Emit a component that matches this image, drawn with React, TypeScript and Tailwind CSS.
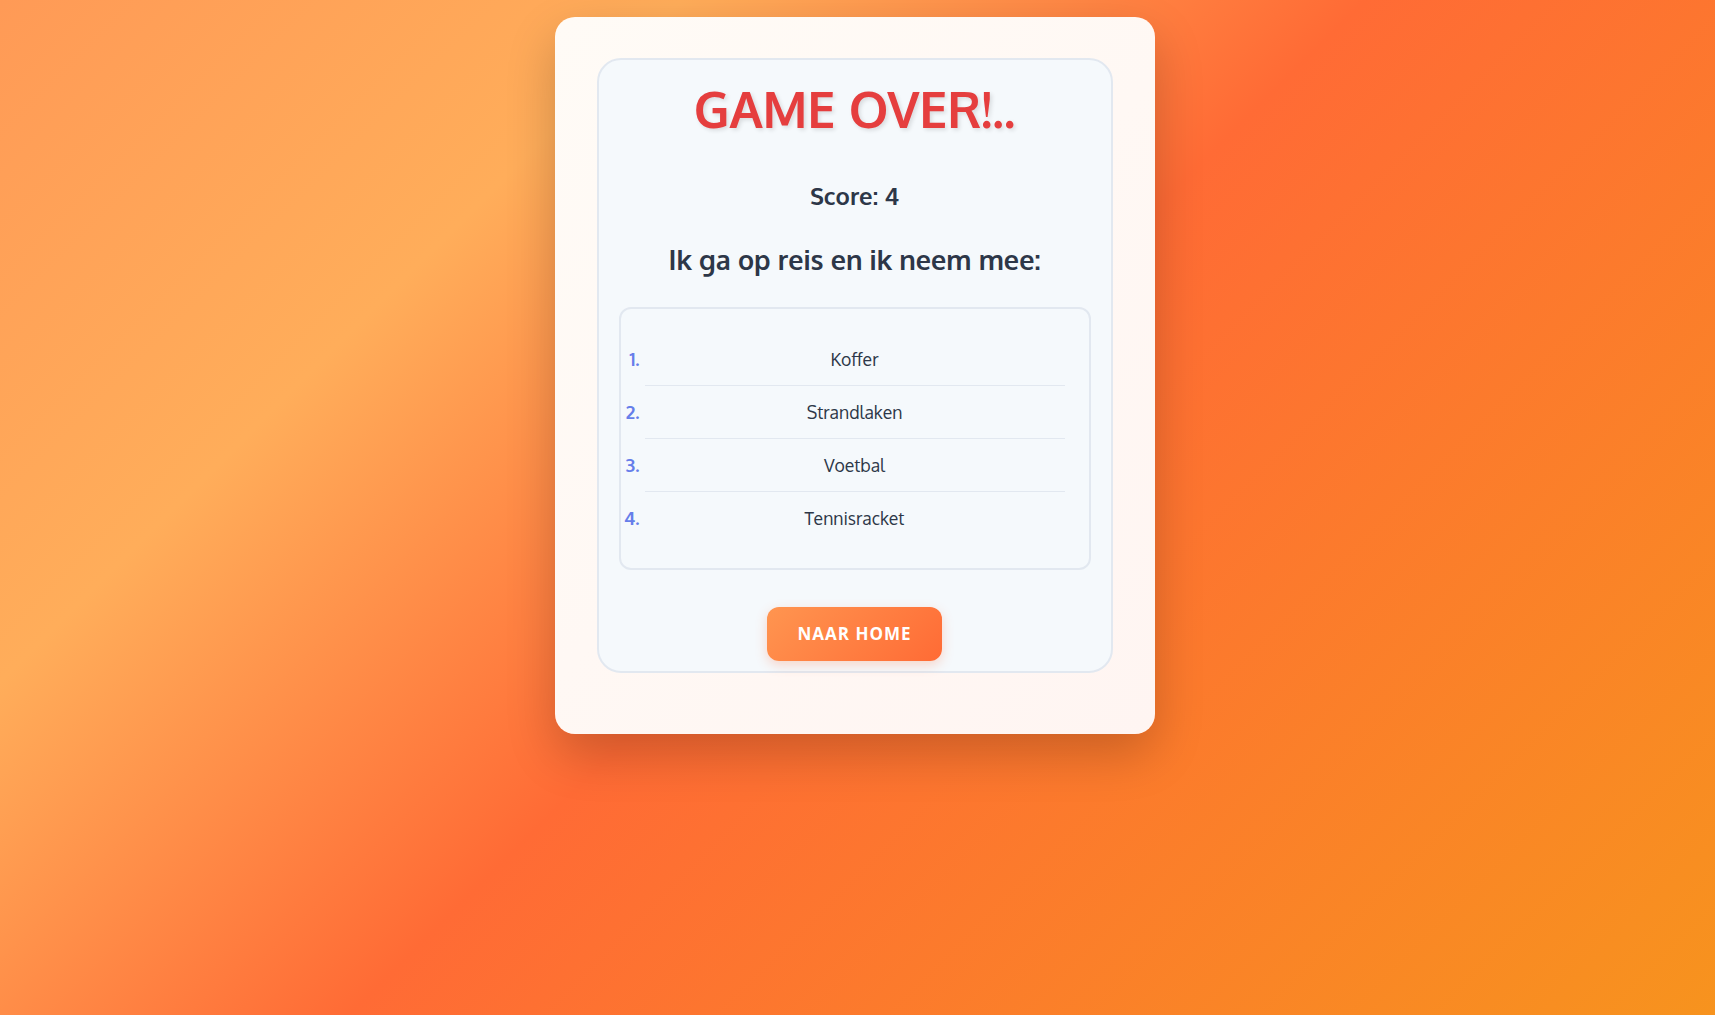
import React from "react";

const items = ["Koffer", "Strandlaken", "Voetbal", "Tennisracket"];

export default function App() {
  return (
    <div
      className="min-h-screen w-full flex justify-center items-start pt-[17px] pr-[6px] bg-[linear-gradient(135deg,#ff9a56_0%,#ffad5a_25%,#ff6b35_50%,#f7931e_100%)]"
      style={{ fontFamily: 'Oxygen, "Noto Sans", sans-serif' }}
    >
      <div className="w-[600px] rounded-[20px] bg-[linear-gradient(135deg,#fffbf6,#fff5f2)] shadow-[0_20px_50px_rgba(0,0,0,0.2)] pt-[41px] px-[42px] pb-[61px]">
        <div className="rounded-[24px] border-2 border-[#e2e8f0] bg-[#f5f9fc] px-5 pt-[19px] pb-[10px] flex flex-col items-center">
          <h1 className="text-[50px] leading-[60px] font-bold text-[#e53e3e] [text-shadow:2px_2px_4px_rgba(0,0,0,0.12)] text-center">
            GAME OVER!..
          </h1>
          <p className="mt-[39px] text-[24px] leading-[36px] font-bold text-[#2d3748]">Score: 4</p>
          <h2 className="mt-[25px] text-[27px] leading-[40px] font-bold text-[#2d3748]">Ik ga op reis en ik neem mee:</h2>
          <div className="mt-[28px] w-full rounded-[12px] border-2 border-[#e2e8f0] bg-[#f5f9fc] px-6 py-6">
            <ol className="list-decimal list-outside marker:text-[#667eea] marker:font-bold marker:text-[18.5px]">
              {items.map((it, i) => (
                <li
                  key={it}
                  className={`py-[13px] text-center text-[17.6px] leading-[26px] text-[#2d3748] ${i < items.length - 1 ? "border-b border-[#e2e8f0]" : ""}`}
                >
                  {it}
                </li>
              ))}
            </ol>
          </div>
          <button
            className="mt-[37px] rounded-[12px] px-[30px] py-[15px] text-[17px] leading-[24px] font-bold uppercase tracking-[1px] text-white bg-[linear-gradient(135deg,#ff9550,#ff6b35)] shadow-[0_4px_12px_rgba(255,107,53,0.25)]"
            style={{ fontFamily: '"Open Sans", sans-serif' }}
          >
            Naar Home
          </button>
        </div>
      </div>
    </div>
  );
}
